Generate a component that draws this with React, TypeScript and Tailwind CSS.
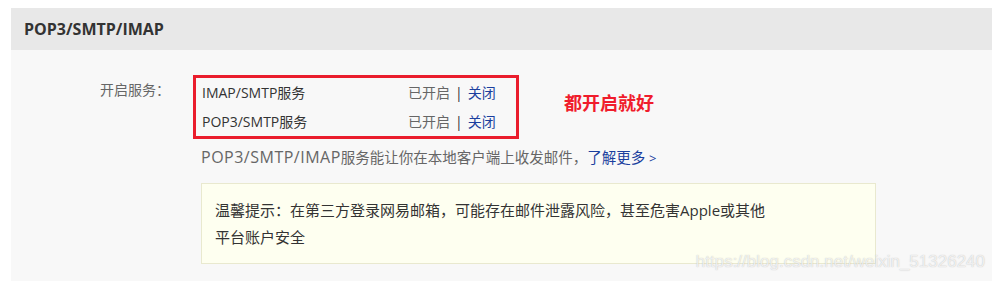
import React from 'react';

const services = [
  { name: 'IMAP/SMTP服务' },
  { name: 'POP3/SMTP服务' },
];

const App: React.FC = () => {
  return (
    <div
      className="relative w-[992px] h-[281px] overflow-hidden bg-white pt-2 pl-[11px]"
      style={{ fontFamily: '"Open Sans", "Noto Sans CJK SC", sans-serif' }}
    >
      <div className="flex h-[42px] items-center bg-[#e8e8e8] px-[13px] text-[16px] font-bold text-[#333]">
        POP3/SMTP/IMAP
      </div>

      <div className="h-[240px] bg-[#f8f8f8] pl-[89px] pt-[25px]">
        <div className="flex items-start">
          <div className="w-[70px] pt-[5px] text-[14px] leading-[20px] text-[#666]">开启服务：</div>
          <div className="ml-[23px] w-[326px] border-[3px] border-[#ea1d2c] pl-[6px]">
            {services.map((s) => (
              <div key={s.name} className="flex h-[29px] items-center text-[14px] text-[#333]">
                <span className="w-[206px]">{s.name}</span>
                <span className="text-[#666]">已开启</span>
                <span className="mx-[5px] text-[#333]">|</span>
                <a className="text-[#1b3f9e]">关闭</a>
              </div>
            ))}
          </div>
          <div className="ml-[45px] mt-[16px] text-[18px] font-bold leading-[24px] text-[#f01c2c]">都开启就好</div>
        </div>

        <div className="ml-[101px] mt-[8px] text-[14.5px] leading-[20px] text-[#666]">
          <span className="text-[16px] tracking-[0.5px]">POP3/SMTP/IMAP</span>服务能让你在本地客户端上收发邮件，
          <a className="text-[#1b3f9e]">
            了解更多 <span className="text-[13px]">&gt;</span>
          </a>
        </div>

        <div className="ml-[101px] mt-[15px] h-[81px] w-[675px] border border-[#e9e9cf] bg-[#fefff0] pl-[13px] pt-[13px] text-[15px] leading-[27px] text-[#333]">
          温馨提示：在第三方登录网易邮箱，可能存在邮件泄露风险，甚至危害Apple或其他
          <br />
          平台账户安全
        </div>
      </div>

      <div
        className="absolute right-[7px] top-[251px] text-[17px] leading-[22px] text-[rgba(255,255,255,0.75)]"
        style={{ fontFamily: '"Liberation Sans", Arial, sans-serif', textShadow: '0 0 1px rgba(120,120,120,0.5)' }}
      >
        https://blog.csdn.net/weixin_51326240
      </div>
    </div>
  );
};

export default App;
